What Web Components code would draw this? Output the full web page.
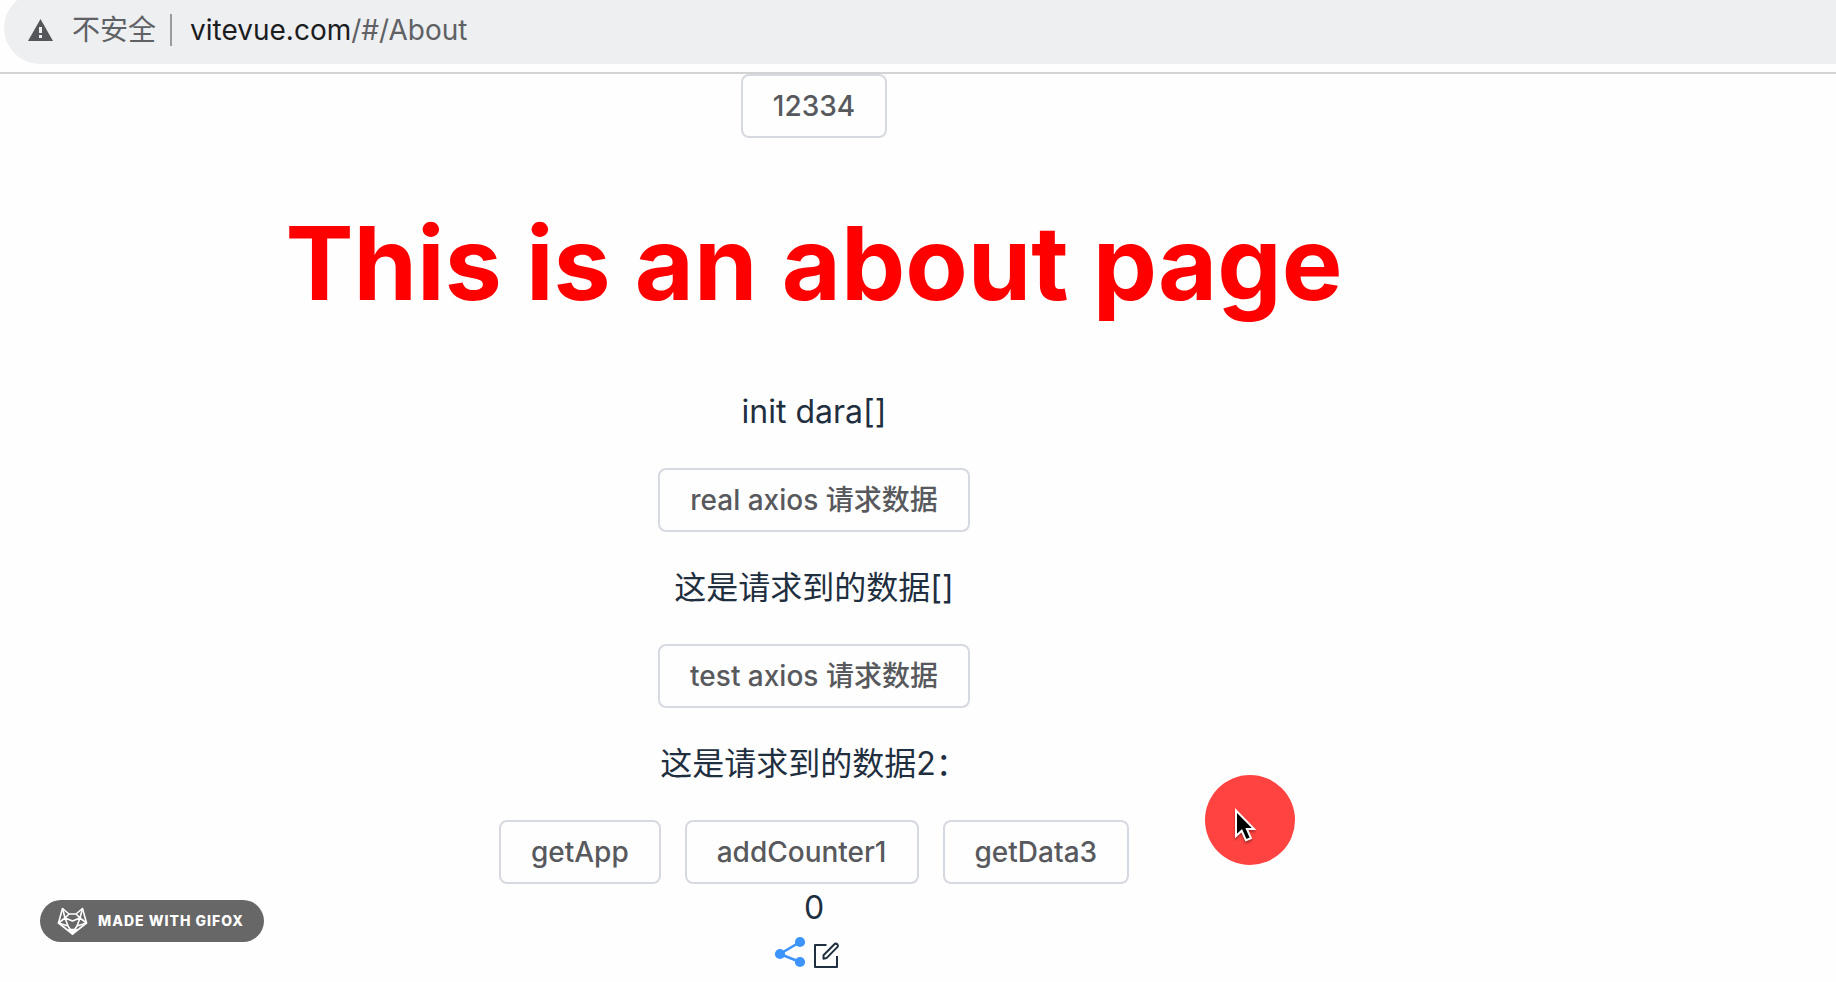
<!DOCTYPE html>
<html lang="zh-CN">
<head>
<meta charset="utf-8">
<title>About</title>
<style>
html, body { margin: 0; height: 100%; background: #fefefe; }
body { font-family: Inter, "Noto Sans CJK SC", sans-serif; color: #1f2f40; }
</style>
</head>
<body>
<about-app></about-app>
<script>
const define = (name, html) => customElements.define(name, class extends HTMLElement {
  constructor() {
    super();
    const t = document.createElement('template');
    t.innerHTML = html;
    this.attachShadow({ mode: 'open' }).append(t.content.cloneNode(true));
  }
});

define('address-bar', `
<style>
:host { display: block; overflow: hidden; padding: 0 0 8px 4px; border-bottom: 2px solid #d3d3d4; background: #fefefe; }
.pill { display: flex; align-items: center; height: 72px; margin-top: -8px; padding: 4px 0 0 24px; box-sizing: border-box;
  background: #eeeff1; border-radius: 36px 0 0 36px; font-size: 28px; line-height: 40px; color: #5f6165; white-space: nowrap; }
svg { display: block; width: 25px; height: 22px; margin-right: 19px; }
.sep { width: 2px; height: 32px; margin: 0 18px 0 14px; background: #9a9b9e; }
b { font-weight: 400; color: #1b1c1f; }
</style>
<div class="pill">
  <svg viewBox="0 0 25 22" aria-hidden="true"><path fill="#54565a" d="M12.5 0 25 22H0z"/><path fill="#eeeff1" d="M11 8h3v6h-3zM11 16h3v3h-3z"/></svg>
  <span>不安全</span><i class="sep"></i><span><b>vitevue.com</b>/#/About</span>
</div>`);

define('el-button', `
<style>
:host { display: inline-block; }
button { display: block; height: 64px; padding: 0 30px; box-sizing: border-box; border: 2px solid #d6d9e0; border-radius: 8px;
  background: #fefefe; color: #58595d; font: 500 28px/28px Inter, "Noto Sans CJK SC", sans-serif; white-space: nowrap; }
</style>
<button type="button"><slot></slot></button>`);

define('share-icon', `
<style>:host { display: block; } svg { display: block; }</style>
<svg width="40" height="40" viewBox="0 0 40 40" fill="#3d94fd" stroke="#3d94fd" aria-hidden="true">
  <path d="M26 10 6 22l20 8" fill="none" stroke-width="2.6"/>
  <g stroke="none"><circle cx="26" cy="10" r="5.1"/><circle cx="6" cy="22" r="5.1"/><circle cx="26" cy="30" r="5.1"/></g>
</svg>`);

define('edit-icon', `
<style>:host { display: block; } svg { display: block; }</style>
<svg width="40" height="40" viewBox="0 0 40 40" fill="none" stroke="#1f2f40" stroke-width="2" stroke-linejoin="round" aria-hidden="true">
  <path d="M12.500 13H1V35H23V24"/>
  <path d="M9.500 26.700V23.200L20.400 12.300a1.900 1.900 0 0 1 2.900 2.800L12.500 26.100z" stroke-width="2"/>
</svg>`);

define('click-cursor', `
<style>
:host { position: absolute; left: 1205px; top: 775px; width: 90px; height: 90px; border-radius: 50%; background: #ff4340; pointer-events: none; }
svg { display: block; margin: 31px 0 0 29px; overflow: visible; filter: drop-shadow(0 2px 1px #0005); }
</style>
<svg width="26" height="38" viewBox="0 0 26 38" aria-hidden="true">
  <path d="M2 4.500V30l5.700-5.300 4.200 9.400 5-2-4-9.200H20z" fill="#000" stroke="#fff" stroke-width="2"/>
</svg>`);

define('gifox-badge', `
<style>
:host { position: absolute; left: 40px; top: 900px; display: flex; align-items: center; width: 224px; height: 42px; padding-left: 17px;
  box-sizing: border-box; border-radius: 21px; background: #676767; color: #fff; font-size: 14px; line-height: 20px; font-weight: 800; letter-spacing: 1px; white-space: nowrap; }
svg { margin-right: 10px; }
</style>
<svg width="31" height="28" viewBox="0 0 31 28" fill="none" stroke="#fff" stroke-width="1.600" stroke-linejoin="round" aria-hidden="true">
  <path d="M5.500 1.500 12 7h7l6.500-5.500 4 14.500-14 11L1.500 16z"/>
  <path d="M5.500 1.500 8 11l-6.500 5 9.500 3L8 11l4-4M25.500 1.500 23 11l6.500 5-9.500 3 3-8-4-4M8 11l7.500 3 7.500-3M11 19l4.500 7 4.500-7"/>
  <path d="m12 22.500 3.500 4.500 3.500-4.500z" fill="#fff"/>
</svg>
<span>MADE WITH GIFOX</span>`);

define('about-page', `
<style>
:host { display: block; padding-right: 208px; text-align: center; font-size: 32px; line-height: 48px; }
h1 { margin: 69px 0; font-size: 102px; line-height: 112px; font-weight: 700; color: #f00; }
p { margin: 32px 0; }
.row { display: flex; justify-content: center; gap: 24px; }
.icons { display: flex; justify-content: center; }
</style>
<div class="row"><el-button>12334</el-button></div>
<h1>This is an about page</h1>
<p>init dara[]</p>
<div class="row"><el-button>real axios 请求数据</el-button></div>
<p>这是请求到的数据[]</p>
<div class="row"><el-button>test axios 请求数据</el-button></div>
<p>这是请求到的数据2：</p>
<div class="row"><el-button>getApp</el-button><el-button>addCounter1</el-button><el-button>getData3</el-button></div>
<div>0</div>
<div class="icons"><share-icon></share-icon><edit-icon></edit-icon></div>`);

define('about-app', `
<style>:host { display: block; position: relative; }</style>
<address-bar></address-bar>
<about-page></about-page>
<click-cursor></click-cursor>
<gifox-badge></gifox-badge>`);
</script>
</body>
</html>
